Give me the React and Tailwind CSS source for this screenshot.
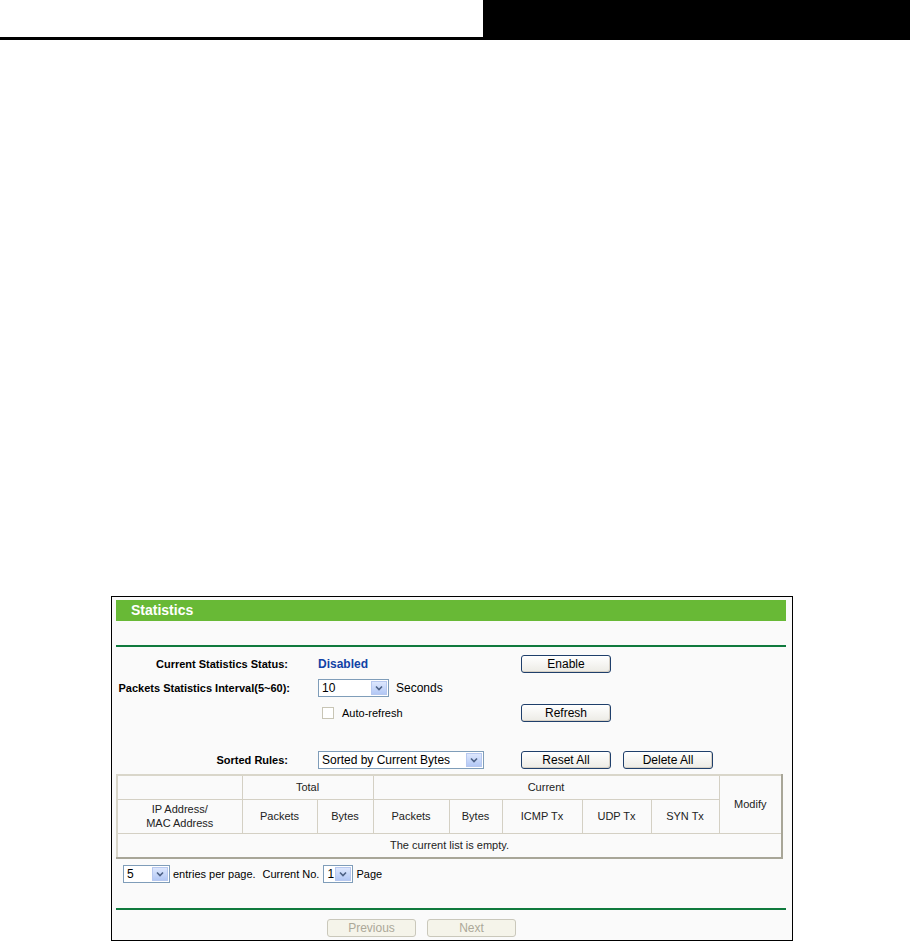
import React from "react";

const font = { fontFamily: '"Liberation Sans", Arial, sans-serif' };

function Arrow() {
  return (
    <div className="flex h-full w-[16px] items-center justify-center border border-[#b7c8ef] bg-gradient-to-b from-[#dde7fd] to-[#b3c8f5]">
      <svg width="8" height="6" viewBox="0 0 8 6">
        <path d="M1 1.5 L4 4.5 L7 1.5" fill="none" stroke="#4d6185" strokeWidth="1.6" />
      </svg>
    </div>
  );
}

function Select({ value, w, text = "text-[12px]" }) {
  return (
    <div className={`flex h-[18px] items-center border border-[#7f9db9] bg-white ${w}`}>
      <div className={`flex-1 pl-[3px] leading-none text-black ${text}`}>{value}</div>
      <div className="h-full p-px">
        <Arrow />
      </div>
    </div>
  );
}

function Btn({ children, disabled }) {
  return disabled ? (
    <div className="flex h-[18px] w-[89px] items-center justify-center rounded-[3px] border border-[#cac8bb] bg-[#f5f4ea] text-[12px] text-[#aca899]">
      {children}
    </div>
  ) : (
    <div className="flex h-[18px] w-[90px] items-center justify-center rounded-[3px] border border-[#1f3f6b] bg-gradient-to-b from-white to-[#ecebe5] text-[12px] text-black shadow-[inset_-1px_-1px_0_#d6d0c5]">
      {children}
    </div>
  );
}

const cell = "border border-[#d4d0c4] text-[11px] text-[#222] text-center align-middle font-normal";

export default function App() {
  return (
    <div className="min-h-[942px] w-[910px] bg-white" style={font}>
      <div className="flex h-[40px]">
        <div className="h-full w-[483px] border-b-[3px] border-black" />
        <div className="h-full flex-1 bg-black" />
      </div>
      <div className="h-[556px]" />
      <div className="ml-[111px] flex h-[345px] w-[682px] flex-col border border-black bg-[#fafafa] pb-[3px] pl-[4px] pr-[6px] pt-[3px]">
        <div className="flex h-[21px] items-center bg-[#68b936] pl-[15px] text-[14px] font-bold text-white">
          Statistics
        </div>
        <div className="mt-[24px] h-[2px] bg-[#0f7a3d]" />

        <div className="mt-[8px] flex h-[18px] items-center">
          <div className="w-[172px] text-right text-[11px] font-bold text-black">Current Statistics Status:</div>
          <div className="ml-[30px] w-[203px] text-[12px] font-bold text-[#1142a6]">Disabled</div>
          <Btn>Enable</Btn>
        </div>

        <div className="mt-[6px] flex h-[18px] items-center">
          <div className="w-[174px] whitespace-nowrap text-right text-[11px] font-bold text-black">Packets Statistics Interval(5~60):</div>
          <div className="ml-[28px] flex items-center">
            <Select value="10" w="w-[71px]" />
            <span className="ml-[7px] text-[12px] text-black">Seconds</span>
          </div>
        </div>

        <div className="mt-[7px] flex h-[18px] items-center">
          <div className="w-[206px]" />
          <div className="flex w-[199px] items-center">
            <div className="h-[12px] w-[12px] border border-[#c8c5b5] bg-white" />
            <span className="ml-[8px] text-[11px] text-black">Auto-refresh</span>
          </div>
          <Btn>Refresh</Btn>
        </div>

        <div className="mt-[29px] flex h-[18px] items-center">
          <div className="w-[172px] text-right text-[11px] font-bold text-black">Sorted Rules:</div>
          <div className="ml-[30px] w-[203px]">
            <Select value="Sorted by Current Bytes" w="w-[166px]" />
          </div>
          <Btn>Reset All</Btn>
          <div className="ml-[12px]">
            <Btn>Delete All</Btn>
          </div>
        </div>

        <table
          className="mt-[5px] w-[667px] border-collapse border-2 border-[#d9d6ca] border-r-[#a8a698] border-b-[#a8a698] bg-[#fafafa]"
          style={{ tableLayout: "fixed" }}
        >
          <colgroup>
            <col style={{ width: 125 }} />
            <col style={{ width: 75 }} />
            <col style={{ width: 56 }} />
            <col style={{ width: 76 }} />
            <col style={{ width: 53 }} />
            <col style={{ width: 80 }} />
            <col style={{ width: 69 }} />
            <col style={{ width: 68 }} />
            <col style={{ width: 63 }} />
          </colgroup>
          <tbody>
            <tr className="h-[24px]">
              <td className={cell}></td>
              <td className={cell} colSpan={2}>Total</td>
              <td className={cell} colSpan={5}>Current</td>
              <td className={cell} rowSpan={2}>Modify</td>
            </tr>
            <tr className="h-[34px]">
              <td className={`${cell} leading-[14px]`}>
                IP Address/
                <br />
                MAC Address
              </td>
              <td className={cell}>Packets</td>
              <td className={cell}>Bytes</td>
              <td className={cell}>Packets</td>
              <td className={cell}>Bytes</td>
              <td className={cell}>ICMP Tx</td>
              <td className={cell}>UDP Tx</td>
              <td className={cell}>SYN Tx</td>
            </tr>
            <tr className="h-[25px]">
              <td className={cell} colSpan={9}>The current list is empty.</td>
            </tr>
          </tbody>
        </table>

        <div className="mt-[6px] flex h-[18px] items-center pl-[7px] text-[11px] text-black">
          <Select value="5" w="w-[47px]" />
          <span className="ml-[3px]">entries per page.</span>
          <span className="ml-[7px]">Current No.</span>
          <div className="ml-[4px]">
            <Select value="1" w="w-[30px]" />
          </div>
          <span className="ml-[3px]">Page</span>
        </div>

        <div className="mt-[25px] h-[2px] bg-[#0f7a3d]" />

        <div className="mt-[9px] flex h-[18px] items-center">
          <div className="ml-[211px]">
            <Btn disabled>Previous</Btn>
          </div>
          <div className="ml-[11px]">
            <Btn disabled>Next</Btn>
          </div>
        </div>
      </div>
    </div>
  );
}
